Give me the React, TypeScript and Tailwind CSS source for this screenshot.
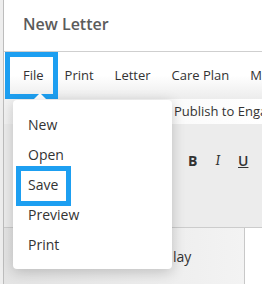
import React from "react";

export default function App() {
  const font = { fontFamily: '"Open Sans", "Noto Sans", sans-serif' };
  return (
    <div className="relative w-[262px] h-[284px] overflow-hidden bg-white flex" style={font}>
      <div className="w-[3px] h-full bg-[#eeeeee] border-r border-[#bdbdbd] box-content" />
      <div className="flex-1 flex flex-col min-w-0">
        <div className="h-[51px] flex items-center pl-[19px] shrink-0">
          <span className="text-[16px] font-semibold text-[#5b5b5b] leading-none pb-[4px]">New Letter</span>
        </div>
        <div className="h-px bg-[#cfcfcf] shrink-0" />
        <div className="h-[47px] flex items-center pl-[19px] gap-[21px] whitespace-nowrap text-[13px] text-[#333] bg-gradient-to-b from-white via-white to-[#ececec] shrink-0">
          <span>File</span>
          <span>Print</span>
          <span>Letter</span>
          <span>Care Plan</span>
          <span>Mi</span>
        </div>
        <div className="h-[25px] flex items-center pl-[170px] whitespace-nowrap text-[13px] text-[#333] bg-gradient-to-r from-[#f2f2f2] to-white shrink-0 overflow-hidden">
          Publish to Enga
        </div>
        <div className="h-[103px] bg-[#ececec] flex items-start pt-[26px] pl-[184px] gap-[18px] text-[14px] text-[#333] shrink-0">
          <span className="font-bold">B</span>
          <span className="italic font-serif">I</span>
          <span className="underline font-semibold">U</span>
        </div>
        <div className="h-px bg-[#cccccc] shrink-0" />
        <div className="flex-1 flex bg-[#ededed]">
          <div className="w-[241px] flex items-start pl-[169px] pt-[18px] text-[14px] text-[#333] bg-gradient-to-r from-[#e4e4e4] to-[#f3f3f3] border-r border-[#c8c8c8]">
            lay
          </div>
          <div className="flex-1 bg-white" />
        </div>
      </div>

      {/* File highlight */}
      <div className="absolute left-[5px] top-[52px] w-[53px] h-[47px] border-[5px] border-[#1d9ff1]" />
      {/* caret */}
      <div className="absolute left-[33px] top-[93px] w-0 h-0 border-l-[7px] border-r-[7px] border-b-[7px] border-l-transparent border-r-transparent border-b-white" />

      {/* dropdown */}
      <div className="absolute left-[13px] top-[100px] w-[159px] h-[169px] bg-white rounded-[4px] shadow-[0_3px_14px_rgba(0,0,0,0.2)] flex flex-col pt-[9px] text-[14px] text-[#333]">
        {["New", "Open", "Save", "Preview", "Print"].map((t) => (
          <div key={t} className="h-[30px] flex items-center pl-[15px]">
            {t}
          </div>
        ))}
      </div>

      {/* Save highlight */}
      <div className="absolute left-[16px] top-[166px] w-[55px] h-[40px] border-[5px] border-[#1d9ff1]" />
    </div>
  );
}
